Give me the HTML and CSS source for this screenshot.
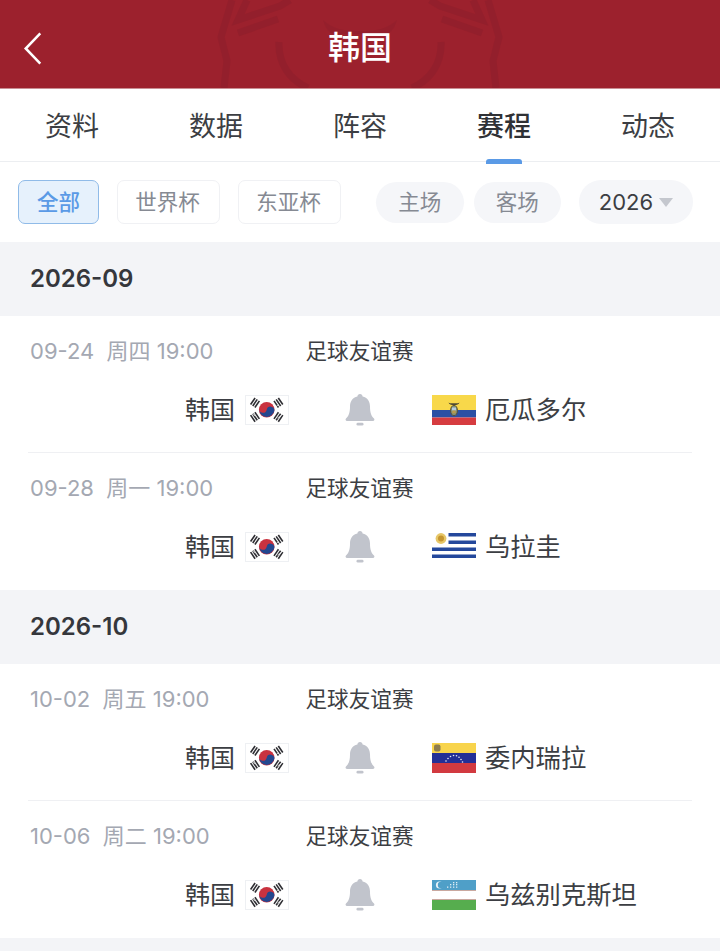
FILE: index.html
```html
<!DOCTYPE html>
<html lang="zh-CN">
<head>
<meta charset="utf-8">
<title>韩国</title>
<link rel="stylesheet" href="styles.css">
</head>
<body>
<svg class="defs" width="0" height="0" aria-hidden="true">
  <defs>
    <g id="tri-solid">
      <rect x="-4" y="-3.400" width="8" height="1.600"/>
      <rect x="-4" y="-0.800" width="8" height="1.600"/>
      <rect x="-4" y="1.800" width="8" height="1.600"/>
    </g>
    <symbol id="flag-kr" viewBox="0 0 44 30">
      <rect x="0.500" y="0.500" width="43" height="29" fill="#fff" stroke="#eef0f3"/>
      <circle cx="21.700" cy="14.700" r="7.800" fill="#c9323f"/>
      <path d="M14 13.600a3.900 3.900 0 0 0 7.700 1.100 3.900 3.900 0 0 1 7.700 1.100A7.800 7.800 0 0 1 14 13.600z" fill="#23478f"/>
      <g fill="#2e2e33">
        <use href="#tri-solid" transform="translate(10 7.700) rotate(-56)"/>
        <use href="#tri-solid" transform="translate(33.400 7.700) rotate(56)"/>
        <use href="#tri-solid" transform="translate(10 22) rotate(56)"/>
        <use href="#tri-solid" transform="translate(33.400 22) rotate(-56)"/>
      </g>
      <g stroke="#fff" stroke-width=".7">
        <path d="M30.500 12l3-2.100"/>
        <path d="M7.500 19l3 2.100"/>
        <path d="M32.500 23l4-2.700"/>
      </g>
    </symbol>
    <symbol id="flag-ec" viewBox="0 0 44 30">
      <rect width="44" height="15" fill="#f8d84a"/>
      <rect y="15" width="44" height="7.500" fill="#2b50a4"/>
      <rect y="22.500" width="44" height="7.500" fill="#d63c40"/>
      <path d="M16.500 7.500c2 1.200 3.600.8 5.500.8s3.500.4 5.500-.8c-.6 2-2.500 2.700-5.500 2.700s-4.900-.7-5.500-2.700z" fill="#4e4a33"/>
      <ellipse cx="22" cy="15.500" rx="3.500" ry="5.200" fill="#7d8f7a" stroke="#5b4d2b" stroke-width=".9"/>
      <rect x="20" y="12.500" width="4" height="3" fill="#b7cde0"/>
      <rect x="20.300" y="15.500" width="3.400" height="3" fill="#b89a4a"/>
    </symbol>
    <symbol id="flag-uy" viewBox="0 0 44 30">
      <rect width="44" height="30" fill="#fff"/>
      <rect x="16.500" y="1" width="27.500" height="3.500" fill="#24489c"/>
      <rect x="16.500" y="8.500" width="27.500" height="3.500" fill="#24489c"/>
      <rect y="15.500" width="44" height="3.500" fill="#24489c"/>
      <rect y="22.500" width="44" height="3.500" fill="#24489c"/>
      <circle cx="9" cy="6.500" r="5.400" fill="#e7c768"/>
      <circle cx="9" cy="6.500" r="3" fill="#c59530"/>
    </symbol>
    <symbol id="flag-ve" viewBox="0 0 44 30">
      <rect width="44" height="10" fill="#f8d44c"/>
      <rect y="10" width="44" height="10" fill="#232f96"/>
      <rect y="20" width="44" height="10" fill="#d23a40"/>
      <rect x="2" y="1.500" width="6.500" height="7" rx="2" fill="#8d7d4f"/>
      <g fill="#e6e8f4">
        <circle cx="14" cy="18" r=".8"/><circle cx="16" cy="15.500" r=".8"/><circle cx="18.500" cy="13.500" r=".8"/><circle cx="21.500" cy="12.500" r=".8"/><circle cx="24.500" cy="12.800" r=".8"/><circle cx="27" cy="14.200" r=".8"/><circle cx="29" cy="16.500" r=".8"/><circle cx="30.500" cy="19" r=".8"/>
      </g>
    </symbol>
    <symbol id="flag-uz" viewBox="0 0 44 30">
      <rect width="44" height="10" fill="#4f9fc8"/>
      <rect y="10" width="44" height="1" fill="#c9a9a0"/>
      <rect y="11" width="44" height="8" fill="#fff"/>
      <rect y="19" width="44" height="1" fill="#c9a9a0"/>
      <rect y="20" width="44" height="10" fill="#56ad4e"/>
      <circle cx="7.500" cy="5" r="3.600" fill="#e8f3f8"/>
      <circle cx="9" cy="5" r="3.200" fill="#4f9fc8"/>
      <g fill="#dcecf4">
        <rect x="15" y="6.500" width="1.300" height="1.300"/><rect x="18" y="4" width="1.300" height="1.300"/><rect x="18" y="6.500" width="1.300" height="1.300"/><rect x="21" y="2" width="1.300" height="1.300"/><rect x="21" y="4" width="1.300" height="1.300"/><rect x="21" y="6.500" width="1.300" height="1.300"/><rect x="24" y="2" width="1.300" height="1.300"/><rect x="24" y="4" width="1.300" height="1.300"/><rect x="24" y="6.500" width="1.300" height="1.300"/>
      </g>
    </symbol>
    <symbol id="bell" viewBox="0 0 30 32">
      <path d="M15 0c1.500 0 2.500 1 2.600 2.400C22.500 3.500 25 7.500 25 12.500c0 6 1.300 9.500 4 12 .9.900.4 2.500-1 2.500H2c-1.400 0-1.900-1.600-1-2.500 2.700-2.500 4-6 4-12C5 7.500 7.500 3.500 12.400 2.400 12.500 1 13.500 0 15 0z" fill="#c1c4cc"/>
      <rect x="11.500" y="28.800" width="7" height="2.700" rx="1.300" fill="#c1c4cc"/>
    </symbol>
  </defs>
</svg>

<header class="topbar">
  <svg class="watermark" viewBox="0 0 720 88" aria-hidden="true">
    <g fill="none" stroke="#8f1f2c" stroke-width="7" opacity=".65">
      <path d="M232 0l-11 37 6 24-3 27"/>
      <path d="M488 0l11 37-6 24 3 27"/>
      <path d="M247 0l-9 20 42-14 10-6"/>
      <path d="M473 0l9 20-42-14-10-6"/>
      <path d="M238 33l40-14"/>
      <path d="M482 33l-40-14"/>
      <path d="M308 88c-18-8-30-24-29-46"/>
      <path d="M412 88c18-8 30-24 29-46"/>
    </g>
    <path d="M323 20c10 9 21 11 37 11s27-2 37-11c-3 10-7 14-13 14h-48c-6 0-10-4-13-14z" fill="#8f1f2c" opacity=".55"/>
  </svg>
  <svg class="back" viewBox="0 0 20 34" aria-hidden="true"><path d="M17.500 1.500L2.500 17l15 15.500" fill="none" stroke="#fff" stroke-width="2.600"/></svg>
  <h1 class="title">韩国</h1>
</header>

<nav class="tabs">
  <a class="tab">资料</a>
  <a class="tab">数据</a>
  <a class="tab">阵容</a>
  <a class="tab active">赛程</a>
  <a class="tab">动态</a>
</nav>

<div class="filters">
  <span class="chip selected">全部</span>
  <span class="chip">世界杯</span>
  <span class="chip">东亚杯</span>
  <span class="spacer"></span>
  <span class="pill">主场</span>
  <span class="pill">客场</span>
  <span class="pill year">2026<i class="caret"></i></span>
</div>

<main class="list">
  <h2 class="month">2026-09</h2>
  <section class="group">
    <article class="match">
      <div class="line meta"><span class="date">09-24&nbsp;&nbsp;周四 19:00</span><span class="league">足球友谊赛</span></div>
      <div class="line teams">
        <div class="team home"><span>韩国</span><svg class="flag"><use href="#flag-kr"/></svg></div>
        <svg class="bell"><use href="#bell"/></svg>
        <div class="team"><svg class="flag"><use href="#flag-ec"/></svg><span>厄瓜多尔</span></div>
      </div>
    </article>
    <article class="match">
      <div class="line meta"><span class="date">09-28&nbsp;&nbsp;周一 19:00</span><span class="league">足球友谊赛</span></div>
      <div class="line teams">
        <div class="team home"><span>韩国</span><svg class="flag"><use href="#flag-kr"/></svg></div>
        <svg class="bell"><use href="#bell"/></svg>
        <div class="team"><svg class="flag"><use href="#flag-uy"/></svg><span>乌拉圭</span></div>
      </div>
    </article>
  </section>
  <h2 class="month">2026-10</h2>
  <section class="group">
    <article class="match">
      <div class="line meta"><span class="date">10-02&nbsp;&nbsp;周五 19:00</span><span class="league">足球友谊赛</span></div>
      <div class="line teams">
        <div class="team home"><span>韩国</span><svg class="flag"><use href="#flag-kr"/></svg></div>
        <svg class="bell"><use href="#bell"/></svg>
        <div class="team"><svg class="flag"><use href="#flag-ve"/></svg><span>委内瑞拉</span></div>
      </div>
    </article>
    <article class="match">
      <div class="line meta"><span class="date">10-06&nbsp;&nbsp;周二 19:00</span><span class="league">足球友谊赛</span></div>
      <div class="line teams">
        <div class="team home"><span>韩国</span><svg class="flag"><use href="#flag-kr"/></svg></div>
        <svg class="bell"><use href="#bell"/></svg>
        <div class="team"><svg class="flag"><use href="#flag-uz"/></svg><span>乌兹别克斯坦</span></div>
      </div>
    </article>
  </section>
</main>
</body>
</html>
```

FILE: styles.css
```css
* { box-sizing: border-box; }
html, body { margin: 0; padding: 0; }
body {
  width: 720px;
  height: 951px;
  overflow: hidden;
  background: #f3f4f7;
  font-family: Inter, "Noto Sans CJK SC", sans-serif;
  color: #35373c;
}
.defs { display: block; height: 0; }

.topbar {
  position: relative;
  height: 89px;
  display: flex;
  align-items: center;
  justify-content: center;
  padding-top: 8px;
  background: #9c212d;
  border-bottom: 1px solid #c98e93;
  overflow: hidden;
}
.watermark { position: absolute; left: 0; top: 0; width: 720px; height: 88px; }
.back { position: absolute; left: 23px; top: 32px; width: 20px; height: 33px; }
.title {
  position: relative;
  margin: 0;
  font-size: 32px;
  line-height: 44px;
  font-weight: 500;
  color: #fff;
}

.tabs {
  display: grid;
  grid-template-columns: repeat(5, 144px);
  height: 73px;
  background: #fff;
  border-bottom: 1px solid #eceef1;
}
.tab {
  position: relative;
  text-align: center;
  font-size: 27px;
  line-height: 75px;
  color: #3c3e43;
}
.tab.active { font-weight: 500; color: #2f3135; }
.tab.active::after {
  content: "";
  position: absolute;
  left: 54px;
  bottom: 0;
  width: 36px;
  height: 5px;
  border-radius: 3px 3px 0 0;
  background: #5a9ae6;
}

.filters {
  height: 80px;
  display: flex;
  align-items: center;
  padding: 0 27px 0 18px;
  background: #fff;
}
.chip {
  width: 103px;
  height: 44px;
  margin-right: 18px;
  padding: 0 2px 3px 0;
  display: flex;
  align-items: center;
  justify-content: center;
  border: 1px solid #f0f1f4;
  border-radius: 7px;
  font-size: 21.500px;
  color: #868a93;
}
.chip.selected {
  width: 81px;
  padding-right: 0;
  background: #e6f1fc;
  border-color: #90bbe8;
  color: #5a9ae6;
  font-weight: 500;
}
.spacer { flex: 1; }
.pill {
  height: 41px;
  width: 87.500px;
  margin-left: 10px;
  padding-bottom: 3px;
  display: flex;
  align-items: center;
  justify-content: center;
  border-radius: 21px;
  background: #f5f6f9;
  font-size: 21.500px;
  color: #868a93;
}
.pill.year {
  width: 114px;
  height: 44px;
  margin-left: 18px;
  padding-bottom: 0;
  border-radius: 22px;
  font-size: 22px;
  color: #3c3e43;
}
.caret {
  width: 0;
  height: 0;
  margin-left: 6px;
  border: 7px solid transparent;
  border-top: 9px solid #c4c7ce;
  border-bottom: 0;
}

.list { display: block; }
.month {
  margin: 0;
  height: 74px;
  padding-left: 30px;
  font-size: 24px;
  line-height: 74px;
  font-weight: 600;
  color: #35373c;
  background: #f3f4f7;
}
.group { background: #fff; padding: 0 28px; }
.match { height: 137px; padding-top: 11px; border-bottom: 1px solid #eff0f3; }
.match:last-child { border-bottom: 0; }
.line {
  display: grid;
  grid-template-columns: 261px 143px 1fr;
  align-items: center;
  justify-items: center;
}
.meta { height: 44px; }
.date {
  justify-self: start;
  padding-left: 2px;
  font-size: 22px;
  color: #a4a8b2;
  white-space: nowrap;
}
.league { margin-right: 2px; font-size: 21.600px; color: #3c3e43; white-space: nowrap; }
.teams { height: 30px; margin-top: 19px; }
.team {
  justify-self: start;
  display: flex;
  align-items: center;
  gap: 9px;
  font-size: 25.300px;
  color: #3c3e43;
  white-space: nowrap;
}
.team span { padding-bottom: 3px; }
.team.home { justify-self: end; gap: 10px; }
.team.home span { font-size: 25px; }
.flag { width: 44px; height: 30px; display: block; flex: none; }
.bell { margin-right: 2px; width: 30px; height: 32px; display: block; }
```
